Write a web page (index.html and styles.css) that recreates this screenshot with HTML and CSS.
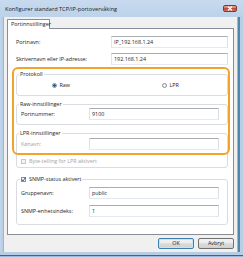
FILE: index.html
```html
<!DOCTYPE html>
<html lang="no">
<head>
<meta charset="utf-8">
<title>Konfigurer standard TCP/IP-portovervåking</title>
<link rel="stylesheet" href="styles.css">
</head>
<body>
<div class="window">
  <div class="titlebar">
    <span class="title">Konfigurer standard TCP/IP-portovervåking</span>
    <span class="close"><svg width="6" height="5" viewBox="0 0 6 5"><path d="M1 0.5 L5 4.5 M5 0.5 L1 4.5" stroke="#fff" stroke-width="1.3" fill="none"/></svg></span>
  </div>
  <div class="middle">
    <div class="frame-l"></div>
    <div class="client">
      <div class="tabs"><div class="tab">Portinnstillinger</div></div>
      <div class="panel">
        <div class="row top"><span>Portnavn:</span><div class="input">IP_192.168.1.24</div></div>
        <div class="row top"><span>Skrivernavn eller IP-adresse:</span><div class="input">192.168.1.24</div></div>
        <div class="groups">
          <fieldset class="group proto">
            <legend>Protokoll</legend>
            <div class="radios">
              <div class="opt first"><span class="radio on"></span><span>Raw</span></div>
              <div class="opt"><span class="radio"></span><span>LPR</span></div>
            </div>
          </fieldset>
          <fieldset class="group raw">
            <legend>Raw-innstillinger</legend>
            <div class="row in"><span>Portnummer:</span><div class="input">9100</div></div>
          </fieldset>
          <fieldset class="group lpr">
            <legend>LPR-innstillinger</legend>
            <div class="row in queue"><span class="dis">Kønavn:</span><div class="input empty"></div></div>
            <div class="checkrow"><span class="check dis"></span><span class="dis">Byte-telling for LPR aktivert</span></div>
          </fieldset>
          <div class="highlight"></div>
        </div>
        <fieldset class="group snmp">
          <legend><span class="check"><svg width="5" height="5" viewBox="0 0 5 5"><path d="M0.8 2.4 L2 3.9 L4.4 0.6" stroke="#253f7a" stroke-width="0.9" fill="none"/></svg></span><span>SNMP-status aktivert</span></legend>
          <div class="row in first"><span>Gruppenavn:</span><div class="input">public</div></div>
          <div class="row in second"><span>SNMP-enhetsindeks:</span><div class="input">1</div></div>
        </fieldset>
      </div>
      <div class="buttons">
        <button class="btn default">OK</button>
        <button class="btn">Avbryt</button>
      </div>
    </div>
    <div class="frame-r"></div>
  </div>
  <div class="frame-b"></div>
</div>
</body>
</html>
```
FILE: styles.css
```css
* { box-sizing: border-box; }
html, body { margin: 0; padding: 0; }
body {
  width: 243px;
  height: 257px;
  overflow: hidden;
  background: #b9d0e9;
  font-family: "Open Sans", "Noto Sans", sans-serif;
  font-size: 5.4px;
  color: #1c1c1c;
}
.window {
  width: 243px;
  height: 257px;
  display: flex;
  flex-direction: column;
  background: #b9d0e9;
}
.titlebar {
  height: 17px;
  flex: none;
  display: flex;
  align-items: center;
  justify-content: space-between;
  padding: 0 6px 0 5px;
  background: linear-gradient(#c8daee, #bcd2ea);
}
.title { font-size: 5.6px; line-height: 8px; color: #1a1a1a; }
.close {
  width: 14px;
  height: 7px;
  border: 1px solid #7b3a33;
  border-radius: 2px;
  background: linear-gradient(#e7a493, #d5735f 45%, #c44a3a 50%, #d4705b);
  display: flex;
  align-items: center;
  justify-content: center;
}
.close svg { display: block; }
.middle { flex: 1; display: flex; }
.frame-l { width: 4px; background: linear-gradient(to right, #c3d6ec, #b4cbe4 75%, #9fb7d1 75%); }
.client {
  width: 233px;
  background: #f0f0f0;
  display: flex;
  flex-direction: column;
}
.frame-r { flex: 1; background: linear-gradient(to right, #9fb7d1 0 1px, #4f88aa 1px 3px, #b7cee7 3px); }
.frame-b { height: 5px; flex: none; background: linear-gradient(#b7cde6 0 2.5px, #2f6b8c 2.5px 4px, #9cbbd8 4px); }

.tabs { height: 11px; flex: none; display: flex; align-items: flex-end; padding-left: 3px; }
.tab {
  position: relative;
  z-index: 1;
  margin-bottom: -1px;
  height: 10px;
  width: 43px;
  border: 1px solid #898c95;
  border-bottom: none;
  border-radius: 1px 1px 0 0;
  background: #fff;
  padding-left: 3px;
  line-height: 9px;
}
.panel {
  flex: none;
  height: 207px;
  margin: 0 3px;
  border: 1px solid #898c95;
  background: #fff;
  padding: 7px 5px 0 8px;
}
.row { display: grid; align-items: center; height: 12px; }
.row.top { grid-template-columns: 95px 1fr; }
.row.top + .row.top { margin-top: 5px; }
.row.in { grid-template-columns: 68px 1fr; }
.input {
  height: 12px;
  border: 1px solid;
  border-color: #abadb3 #dbdfe6 #e3e9ef #e2e3ea;
  background: #fff;
  padding-left: 2px;
  line-height: 10px;
}
.dis { color: #a3a3a3; }

.groups { position: relative; margin-top: 5px; }
.group {
  margin: 0;
  min-width: 0;
  border: 1px solid #d9dde2;
  border-radius: 3px;
  padding: 0 8px 0 4px;
}
.group legend {
  padding: 0 1px;
  margin-left: -2px;
  height: 8px;
  line-height: 8px;
}
.proto { padding-bottom: 6px; }
.radios { display: flex; align-items: center; height: 8px; margin-top: 3px; padding-left: 31px; }
.opt { display: flex; align-items: center; gap: 2.5px; }
.opt.first { width: 110px; }
.radio {
  width: 5px;
  height: 5px;
  border-radius: 50%;
  border: 1px solid #8e8f8f;
  background: radial-gradient(circle, #fdfdfd, #e2e2e2);
}
.radio.on { background: radial-gradient(circle, #1f5f9e 0 1.1px, #d9e8f5 1.6px); }
.raw { margin-top: 4px; padding-bottom: 4px; }
.lpr { margin-top: 4px; padding-bottom: 2px; }
.queue { margin-top: 1px; }
.checkrow { display: flex; align-items: center; gap: 3px; height: 8px; margin-top: 7px; }
.check {
  width: 5px;
  height: 5px;
  border: 1px solid #8f8f8f;
  background: #fff;
  display: flex;
}
.check svg { display: block; margin: -1px; }
.check.dis { border-color: #c8c8c8; background: #f4f4f4; }
.highlight {
  position: absolute;
  left: -4px;
  right: -2px;
  top: -3px;
  height: 88px;
  border: 2px solid #f3a22a;
  border-radius: 6px;
  pointer-events: none;
}
.snmp { margin-top: 7px; padding-bottom: 7px; }
.snmp legend { display: flex; align-items: center; gap: 3px; margin-left: -1px; }
.snmp .first { margin-top: 4px; }
.snmp .second { margin-top: 6px; }

.buttons { flex: none; display: flex; justify-content: flex-end; gap: 4px; margin-top: 3px; padding-right: 3px; }
.btn {
  width: 36px;
  height: 11px;
  padding: 0;
  border: 1px solid #707070;
  border-radius: 2px;
  background: linear-gradient(#f2f2f2, #ebebeb 50%, #dddddd 50%, #cfcfcf);
  font: inherit;
  line-height: 9px;
  color: #1c1c1c;
}
.btn.default { border-color: #3c7fb1; box-shadow: inset 0 0 0 1px #c4e5f6; }
```
